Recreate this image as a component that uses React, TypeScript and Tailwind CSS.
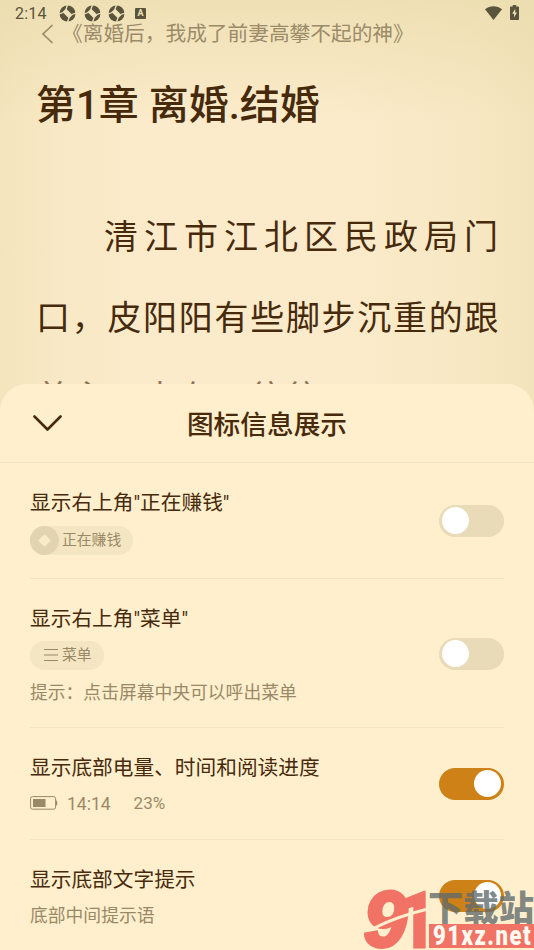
import clsx from 'clsx';

interface SwitchProps {
  on?: boolean;
}

function Switch({ on = false }: SwitchProps) {
  return (
    <button
      type="button"
      role="switch"
      aria-checked={on}
      className={clsx(
        'flex h-8 w-[65px] shrink-0 items-center rounded-full px-[3px]',
        on ? 'justify-end bg-[#cd8116]' : 'justify-start bg-[#e9dbb8]'
      )}
    >
      <span className="size-[27px] rounded-full bg-white" />
    </button>
  );
}

function ApertureIcon() {
  return (
    <svg width="17" height="17" viewBox="0 0 17 17">
      <circle cx="8.5" cy="8.5" r="8" fill="#5a543c" />
      <path d="M7 3.500 13.500 10 10 13.500 3.500 7Z" fill="#f0e2b9" />
      <path d="M7 4 8.500 0M12.800 9.500 17 8M10 13 8.500 17M4.200 7.500 0 9" stroke="#f0e2b9" strokeWidth="1.300" />
    </svg>
  );
}

function StatusBar() {
  return (
    <div className="flex h-[28px] items-center pr-[15px] pl-[15px] text-[#5a543c]">
      <span className="w-[44px] font-[Roboto] text-[16px] leading-none tracking-[0.2px]">2:14</span>
      <div className="-mt-[1px] flex gap-[7.500px]">
        <ApertureIcon />
        <ApertureIcon />
        <ApertureIcon />
      </div>
      <span className="-mt-[1px] ml-[10px] flex size-[11px] items-center justify-center rounded-[1px] bg-[#5a543c] font-[Roboto] text-[9px] leading-[11px] font-bold text-[#f0e2b9]">A</span>
      <svg className="-mt-[3px] ml-auto" width="17" height="14" viewBox="0 0 17 14">
        <path d="M8.5 14 0 3.2C4.8-.7 12.2-.7 17 3.2Z" fill="#5a543c" />
      </svg>
      <svg className="-mt-[3px] ml-[8px]" width="9" height="15" viewBox="0 0 9 15">
        <path d="M2.8 0h3.4v1.5H8c.6 0 1 .4 1 1V14c0 .6-.4 1-1 1H1c-.6 0-1-.4-1-1V2.500c0-.6.4-1 1-1h1.800Z" fill="#5a543c" />
        <path d="M5.200 3.800 2.200 8.800h1.900v3.600L6.900 7.500H5.200Z" fill="#f0e2b9" />
      </svg>
    </div>
  );
}

function Reader() {
  return (
    <div className="h-[384px] overflow-hidden">
      <StatusBar />
      <div className="-mt-[8px] flex h-[28px] items-center pl-[41px] text-[#9b8b69]">
        <svg width="13" height="20" viewBox="0 0 13 20" fill="none" stroke="currentColor" strokeWidth="1.700">
          <path d="M11.500 1 2 10l9.500 9" />
        </svg>
        <span className="ml-[8px] text-[20.700px] leading-[28px] whitespace-nowrap">《离婚后，我成了前妻高攀不起的神》</span>
      </div>
      <h1 className="mt-[28px] pl-[36px] text-[40px] leading-[60px] font-medium whitespace-nowrap text-[#472a0c]">第1章 离婚.结婚</h1>
      <div className="mt-[60px] pl-[36px] text-[34px] leading-[82px] whitespace-nowrap text-[#472a0c]">
        <p className="pl-[68px] tracking-[6px]">清江市江北区民政局门</p>
        <p className="-mt-[1px] tracking-[1.700px]">口，皮阳阳有些脚步沉重的跟</p>
        <p className="-mt-[2px] tracking-[1.700px] opacity-60">着主，中在一往往</p>
      </div>
    </div>
  );
}

function MoneyTag() {
  return (
    <div className="flex h-[29px] w-[103px] items-center rounded-full bg-[#f4e6c2] text-[14.800px] text-[#998967]">
      <span className="mr-[3px] flex size-[29px] items-center justify-center rounded-full bg-[#e2d4b0]">
        <span className="size-[9px] rotate-45 rounded-[1px] bg-[#f9ebc8]" />
      </span>
      正在赚钱
    </div>
  );
}

function MenuTag() {
  return (
    <div className="flex h-[29px] w-[74px] items-center rounded-full bg-[#f4e6c2] pl-[14px] text-[14.800px] text-[#998967]">
      <svg className="mr-[4px]" width="14" height="12" viewBox="0 0 14 12" stroke="currentColor" strokeWidth="1">
        <path d="M0 .5h14M0 6h14M0 11.500h14" />
      </svg>
      <span className="pt-[1px]">菜单</span>
    </div>
  );
}

function BatteryInfo() {
  return (
    <div className="flex h-[24px] items-center font-[Roboto] text-[17.500px] text-[#998967]">
      <svg className="-mt-[2px]" width="28" height="14" viewBox="0 0 28 14">
        <rect x=".6" y=".6" width="25" height="12.600" rx="2" fill="none" stroke="currentColor" />
        <rect x="3" y="3" width="12.500" height="8" fill="currentColor" />
        <path d="M26 4q2.800 2.800 0 6Z" fill="currentColor" />
      </svg>
      <span className="ml-[9px]">14:14</span>
      <span className="ml-[23px] text-[17px]">23%</span>
    </div>
  );
}

interface SettingRowProps {
  title: string;
  on?: boolean;
  className: string;
  children: React.ReactNode;
}

function SettingRow({ title, on, className, children }: SettingRowProps) {
  return (
    <div className={clsx('mx-[30px] flex items-center justify-between border-b border-[#f4e5c1]', className)}>
      <div>
        <div className="pt-[2px] text-[20.700px] leading-[30px] whitespace-nowrap text-[#472a0c]">{title}</div>
        {children}
      </div>
      <Switch on={on} />
    </div>
  );
}

function Watermark() {
  return (
    <div className="absolute right-0 bottom-0 h-[62px] w-[170px]">
      <svg width="170" height="62" viewBox="0 0 170 62">
        <g fill="#f17366" stroke="#f17366">
          <text x="0" y="58" fontFamily="Liberation Sans" fontWeight="700" fontStyle="italic" fontSize="77" textLength="43" lengthAdjust="spacingAndGlyphs" strokeWidth="4">9</text>
          <text x="33" y="60" fontFamily="Roboto" fontWeight="900" fontSize="79" textLength="40" lengthAdjust="spacingAndGlyphs" strokeWidth="1">1</text>
        </g>
        <path d="M8 41Q34 28 64 21" stroke="#ffefcc" strokeWidth="3" fill="none" />
        <text x="64" y="33" fontFamily="Noto Sans CJK SC" fontWeight="900" fontSize="35" textLength="106" lengthAdjust="spacingAndGlyphs" fill="#5f6b6c" fillOpacity=".8">下载站</text>
        <rect x="65" y="36" width="105" height="24" fill="#f17366" />
        <text transform="translate(69 57) scale(.82 1)" fontFamily="Roboto" fontWeight="900" fontSize="27" textLength="119" lengthAdjust="spacing" fill="#fffaf0">91xz.net</text>
      </svg>
    </div>
  );
}

export default function App() {
  return (
    <div className="relative h-[950px] w-[534px] overflow-hidden bg-[#fbebca] bg-[linear-gradient(180deg,#e8daa9a0_0px,#e8daa900_120px),linear-gradient(90deg,#eaddae78_0px,#eaddae28_60px,#eaddae00_160px,#eaddae00_340px,#eaddae38_470px,#eaddae88_534px)] font-[Roboto,'Noto_Sans_CJK_SC',sans-serif]">
      <Reader />
      <div className="h-[566px] rounded-t-[27px] bg-[#ffefcc]">
        <div className="relative flex h-[79px] items-center justify-center border-b border-[#f4e5c1]">
          <svg className="absolute top-[31px] left-[33px]" width="29" height="17" viewBox="0 0 29 17" fill="none" stroke="#472a0c" strokeWidth="2.600" strokeLinecap="round" strokeLinejoin="round">
            <path d="M1.500 1.500 14.500 14.500 27.500 1.500" />
          </svg>
          <h2 className="pt-[5px] text-[26.700px] font-medium text-[#472a0c]">图标信息展示</h2>
        </div>
        <SettingRow title={'显示右上角"正在赚钱"'} className="h-[116px]">
          <div className="mt-[8px]"><MoneyTag /></div>
        </SettingRow>
        <SettingRow title={'显示右上角"菜单"'} className="h-[149px] pt-[1px]">
          <div className="mt-[7px]"><MenuTag /></div>
          <div className="mt-[10px] text-[17.800px] leading-[26px] text-[#998967]">提示：点击屏幕中央可以呼出菜单</div>
        </SettingRow>
        <SettingRow title="显示底部电量、时间和阅读进度" on className="h-[112px]">
          <div className="mt-[9px]"><BatteryInfo /></div>
        </SettingRow>
        <SettingRow title="显示底部文字提示" on className="h-[111px] border-b-0">
          <div className="mt-[8px] text-[17.800px] leading-[26px] text-[#998967]">底部中间提示语</div>
        </SettingRow>
      </div>
      <Watermark />
    </div>
  );
}
